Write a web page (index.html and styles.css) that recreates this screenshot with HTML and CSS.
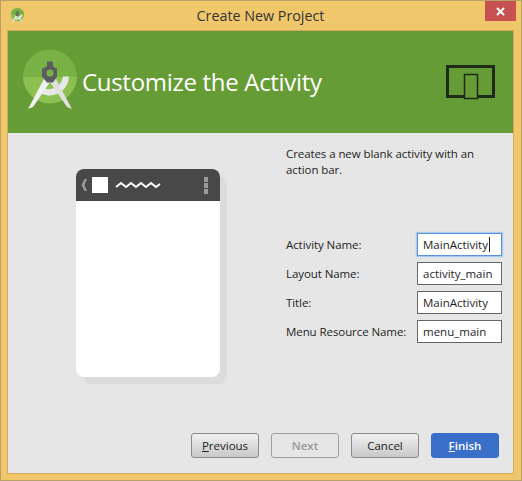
FILE: index.html
```html
<!DOCTYPE html>
<html lang="en">
<head>
  <meta charset="UTF-8">
  <title>Create New Project</title>
  <link rel="stylesheet" href="styles.css">
</head>
<body>

  <svg class="defs" width="0" height="0">
    <symbol id="studioLogo" viewBox="0 0 60 64">
      <path d="M3 30.500a27 27 0 0 1 54 0z" fill="#78b145"/>
      <path d="M3 30.500a27 27 0 0 0 54 0z" fill="#8cc152"/>
      <path d="M49 30.500A19.500 19.500 0 0 1 17 45l4-4A14.500 14.500 0 0 0 43 30.500z" fill="#e8e8e8"/>
      <path d="M24 33l6 3-17 25-5 2z" fill="#f0f0f0"/>
      <path d="M36 33l-6 3 17 25 5 2z" fill="#e0e0e0"/>
      <path d="M27 15.500h6v5l4 2v8l-4 6h-6l-5-6v-8l5-2z" fill="#5c5c60"/>
      <circle cx="30" cy="27" r="3.500" fill="#78b145"/>
    </symbol>
  </svg>

  <div class="window">
    <header class="titlebar">
      <svg class="title-icon"><use href="#studioLogo"/></svg>
      <span class="title-text">Create New Project</span>
      <button class="close-btn" type="button">
        <svg width="9" height="9" viewBox="0 0 9 9"><path d="M1 1l7 7M8 1l-7 7" stroke="#fff" stroke-width="2"/></svg>
      </button>
    </header>

    <main class="content">
      <section class="banner">
        <svg class="banner-logo"><use href="#studioLogo"/></svg>
        <h1>Customize the Activity</h1>
        <svg class="banner-device" width="52" height="36" viewBox="0 0 52 36">
          <rect x="2.500" y="1.500" width="46" height="30" fill="none" stroke="#1f2a1a" stroke-width="3"/>
          <rect x="19.500" y="9.500" width="13" height="24" fill="#669c35" stroke="#1f2a1a" stroke-width="1.500"/>
        </svg>
      </section>

      <section class="panel">
        <div class="preview">
          <div class="phone">
            <div class="phone-bar">
              <svg class="phone-back" width="6" height="12" viewBox="0 0 6 12"><path d="M6 0L3.500 6 6 12H3.500L0.500 6l3-6z" fill="#9a9a9a"/></svg>
              <span class="phone-icon"></span>
              <svg class="phone-wave" width="50" height="8" viewBox="0 0 50 8"><path d="M1 6l5-4 5 4 5-4 5 4 5-4 5 4 5-4 5 4 4-3" fill="none" stroke="#fff" stroke-width="2"/></svg>
              <span class="phone-menu"><i></i><i></i><i></i></span>
            </div>
          </div>
        </div>

        <div class="options">
          <p class="description">Creates a new blank activity with an action bar.</p>
          <form class="fields">
            <div class="row">
              <label for="activity">Activity Name:</label>
              <div class="fake-input focused" id="activity">MainActivity<span class="caret"></span></div>
            </div>
            <div class="row">
              <label for="layout">Layout Name:</label>
              <div class="fake-input" id="layout">activity_main</div>
            </div>
            <div class="row">
              <label for="title">Title:</label>
              <div class="fake-input" id="title">MainActivity</div>
            </div>
            <div class="row">
              <label for="menu">Menu Resource Name:</label>
              <div class="fake-input" id="menu">menu_main</div>
            </div>
          </form>
        </div>
      </section>

      <footer class="actions">
        <button type="button" class="btn"><u>P</u>revious</button>
        <button type="button" class="btn disabled">Next</button>
        <button type="button" class="btn">Cancel</button>
        <button type="button" class="btn primary"><u>F</u>inish</button>
      </footer>
    </main>
  </div>

</body>
</html>
```

FILE: styles.css
```css
body {
  margin: 0;
  font-family: "Open Sans", "Noto Sans", Arial, sans-serif;
  font-size: 12px;
  color: #1e1e1e;
}
.defs {
  display: block;
  height: 0;
}
.window {
  width: 522px;
  height: 481px;
  box-sizing: border-box;
  background-color: #f1c76c;
  border: 1px solid #b9a266;
  display: flex;
  flex-direction: column;
  padding: 0 7px 6px 6px;
}
.titlebar {
  height: 29px;
  flex: none;
  display: flex;
  align-items: center;
  justify-content: center;
  position: relative;
}
.title-icon {
  position: absolute;
  left: 3px;
  top: 6px;
  width: 15px;
  height: 16px;
}
.title-text {
  font-size: 14.300px;
  color: #333;
}
.close-btn {
  position: absolute;
  right: -2px;
  top: 0;
  width: 31px;
  height: 20px;
  border: 0;
  padding: 0;
  background-color: #c75050;
  display: flex;
  align-items: center;
  justify-content: center;
}
.content {
  flex: 1;
  display: flex;
  flex-direction: column;
  background-color: #e6e6e6;
  border: 1px solid #d3a95a;
}
.banner {
  height: 102px;
  flex: none;
  background-color: #669c35;
  display: flex;
  align-items: center;
  padding: 0 16px 0 12px;
}
.banner-logo {
  width: 60px;
  height: 64px;
  margin: 0 2px 9px 0;
}
.banner h1 {
  margin: 0 0 2px;
  font-size: 24px;
  font-weight: 400;
  letter-spacing: -0.3px;
  color: #fff;
  flex: 1;
}
.banner-device {
  margin-top: 2px;
}
.panel {
  flex: 1;
  display: flex;
}
.preview {
  width: 278px;
  flex: none;
  padding: 36px 0 0 68px;
  box-sizing: border-box;
}
.phone {
  width: 144px;
  height: 208px;
  background-color: #fff;
  border-radius: 8px;
  box-shadow: 7px 7px 0 #dcdcdc;
}
.phone-bar {
  height: 32px;
  background-color: #484848;
  border-radius: 8px 8px 0 0;
  display: flex;
  align-items: center;
  padding: 0 12px 0 5px;
}
.phone-icon {
  width: 16px;
  height: 16px;
  background-color: #fff;
  margin-left: 5px;
}
.phone-wave {
  margin-left: 7px;
}
.phone-menu {
  margin-left: auto;
  display: flex;
  flex-direction: column;
  gap: 1px;
}
.phone-menu i {
  display: block;
  width: 4px;
  height: 5px;
  background-color: #9a9a9a;
}
.options {
  flex: 1;
  padding-top: 13px;
}
.description {
  margin: 0;
  width: 210px;
  line-height: 16px;
  font-size: 11.500px;
  letter-spacing: -0.08px;
}
.fields {
  margin-top: 55px;
  display: flex;
  flex-direction: column;
  gap: 6px;
}
.row {
  display: flex;
  align-items: center;
  height: 23px;
}
.row label {
  width: 131px;
  flex: none;
  font-size: 11.500px;
  letter-spacing: -0.08px;
}
.fake-input {
  width: 85px;
  height: 23px;
  box-sizing: border-box;
  border: 1px solid #666;
  background-color: #fff;
  padding-left: 5px;
  line-height: 21px;
  white-space: nowrap;
  overflow: hidden;
  font-size: 11.500px;
}
.focused {
  border: 1px solid #5b94d6;
  box-shadow: 0 0 1px 1px #a8cbef;
}
.caret {
  display: inline-block;
  width: 1px;
  height: 15px;
  margin-left: 1px;
  background-color: #222;
  vertical-align: -3px;
}
.actions {
  flex: none;
  display: flex;
  justify-content: flex-end;
  gap: 12px;
  padding: 0 14px 15px 0;
}
.btn {
  width: 68px;
  height: 25px;
  padding: 0;
  font-family: inherit;
  font-size: 11.500px;
  color: #222;
  border: 1px solid #8a8a8a;
  border-radius: 3px;
  background: linear-gradient(#f0f0f0, #c9c9c9);
}
.disabled {
  color: #999;
  font-weight: 600;
  background: #e6e6e6;
  border-color: #a0a0a0;
}
.primary {
  color: #fff;
  font-weight: 600;
  background: #3a6fc9;
  border-color: #3a6fc9;
}
```
